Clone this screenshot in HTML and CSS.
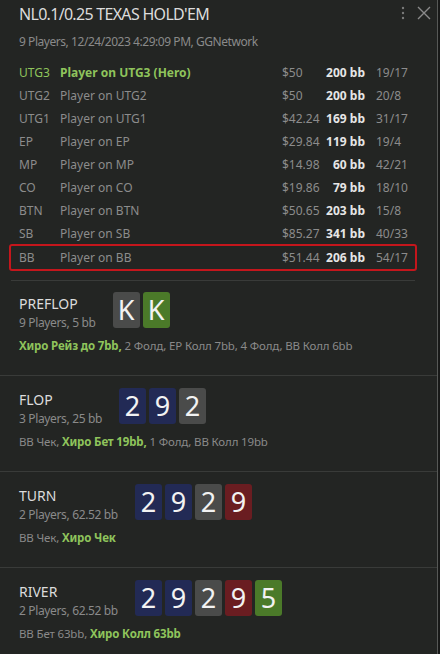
FILE: index.html
```html
<!DOCTYPE html>
<html lang="en">
<head>
  <meta charset="UTF-8" />
  <title>Hand History</title>
  <link rel="stylesheet" href="styles.css">
</head>
<body>
  <div class="panel">
    <div class="header">
      <div class="title">NL0.1/0.25 TEXAS HOLD'EM</div>
      <div class="subtitle">9 Players, 12/24/2023 4:29:09 PM, GGNetwork</div>
      <div class="header-icons">
        <svg class="icon-more" width="4" height="14" viewBox="0 0 4 14">
          <circle cx="2" cy="2" r="1.2" fill="#7a7a7a"/>
          <circle cx="2" cy="7" r="1.2" fill="#7a7a7a"/>
          <circle cx="2" cy="12" r="1.2" fill="#7a7a7a"/>
        </svg>
        <svg class="icon-close" width="14" height="14" viewBox="0 0 14 14">
          <path d="M1 1 L13 13 M13 1 L1 13" stroke="#8a8a8a" stroke-width="1.4" fill="none"/>
        </svg>
      </div>
    </div>

    <div class="players">
      <div class="row hero">
        <span class="pos">UTG3</span><span class="name">Player on UTG3 (Hero)</span>
        <span class="money">$50</span><span class="bb">200 bb</span><span class="ratio">19/17</span>
      </div>
      <div class="row">
        <span class="pos">UTG2</span><span class="name">Player on UTG2</span>
        <span class="money">$50</span><span class="bb">200 bb</span><span class="ratio">20/8</span>
      </div>
      <div class="row">
        <span class="pos">UTG1</span><span class="name">Player on UTG1</span>
        <span class="money">$42.24</span><span class="bb">169 bb</span><span class="ratio">31/17</span>
      </div>
      <div class="row">
        <span class="pos">EP</span><span class="name">Player on EP</span>
        <span class="money">$29.84</span><span class="bb">119 bb</span><span class="ratio">19/4</span>
      </div>
      <div class="row">
        <span class="pos">MP</span><span class="name">Player on MP</span>
        <span class="money">$14.98</span><span class="bb">60 bb</span><span class="ratio">42/21</span>
      </div>
      <div class="row">
        <span class="pos">CO</span><span class="name">Player on CO</span>
        <span class="money">$19.86</span><span class="bb">79 bb</span><span class="ratio">18/10</span>
      </div>
      <div class="row">
        <span class="pos">BTN</span><span class="name">Player on BTN</span>
        <span class="money">$50.65</span><span class="bb">203 bb</span><span class="ratio">15/8</span>
      </div>
      <div class="row">
        <span class="pos">SB</span><span class="name">Player on SB</span>
        <span class="money">$85.27</span><span class="bb">341 bb</span><span class="ratio">40/33</span>
      </div>
      <div class="row marked">
        <span class="pos">BB</span><span class="name">Player on BB</span>
        <span class="money">$51.44</span><span class="bb">206 bb</span><span class="ratio">54/17</span>
      </div>
    </div>

    <div class="street">
      <div class="street-head">
        <div class="street-info">
          <div class="street-name">PREFLOP</div>
          <div class="street-sub">9 Players, 5 bb</div>
        </div>
        <div class="cards">
          <span class="card gray">K</span><span class="card green">K</span>
        </div>
      </div>
      <div class="actions"><b>Хиро Рейз до 7bb,</b> 2 Фолд, EP Колл 7bb, 4 Фолд, BB Колл 6bb</div>
    </div>

    <div class="street">
      <div class="street-head">
        <div class="street-info">
          <div class="street-name">FLOP</div>
          <div class="street-sub">3 Players, 25 bb</div>
        </div>
        <div class="cards">
          <span class="card blue">2</span><span class="card blue">9</span><span class="card gray">2</span>
        </div>
      </div>
      <div class="actions">BB Чек, <b>Хиро Бет 19bb,</b> 1 Фолд, BB Колл 19bb</div>
    </div>

    <div class="street">
      <div class="street-head">
        <div class="street-info">
          <div class="street-name">TURN</div>
          <div class="street-sub">2 Players, 62.52 bb</div>
        </div>
        <div class="cards">
          <span class="card blue">2</span><span class="card blue">9</span><span class="card gray">2</span><span class="card red">9</span>
        </div>
      </div>
      <div class="actions">BB Чек, <b>Хиро Чек</b></div>
    </div>

    <div class="street">
      <div class="street-head">
        <div class="street-info">
          <div class="street-name">RIVER</div>
          <div class="street-sub">2 Players, 62.52 bb</div>
        </div>
        <div class="cards">
          <span class="card blue">2</span><span class="card blue">9</span><span class="card gray">2</span><span class="card red">9</span><span class="card green">5</span>
        </div>
      </div>
      <div class="actions">BB Бет 63bb, <b>Хиро Колл 63bb</b></div>
    </div>
  </div>
</body>
</html>
```

FILE: styles.css
```css
* {
  margin: 0;
  padding: 0;
  box-sizing: border-box;
}

body {
  background: #181918;
  font-family: 'Noto Sans', 'Open Sans', sans-serif;
  height: 654px;
  overflow: hidden;
}

.panel {
  width: 438px;
  min-height: 654px;
  background: #232523;
  border-right: 1px solid #575957;
}

.header {
  position: relative;
  padding: 3px 19px 0;
}

.title {
  font-size: 16px;
  line-height: 22px;
  letter-spacing: -0.7px;
  color: #dcdcdc;
}

.subtitle {
  font-size: 12px;
  line-height: 18px;
  letter-spacing: -0.45px;
  margin-top: 8px;
  color: #8a8a8a;
}

.header-icons {
  position: absolute;
  top: 6px;
  right: 6px;
  display: flex;
  align-items: center;
  gap: 12px;
}

.players {
  margin: 10px 0 0 11px;
  width: 404px;
  padding-bottom: 11px;
  border-bottom: 1px solid #393b39;
}

.row {
  display: grid;
  grid-template-columns: 41px 222px 40px 43px 11px auto;
  align-items: center;
  height: 23px;
  padding-left: 8px;
  font-size: 12px;
  color: #8c8c8c;
  white-space: nowrap;
}

.row .ratio {
  grid-column: 6;
}

.row .bb {
  text-align: right;
  font-weight: bold;
  color: #e6e6e6;
}

.row.hero .pos,
.row.hero .name {
  color: #8fc45c;
}

.row.hero .name {
  font-weight: bold;
}

.row.marked {
  outline: 2px solid #c4161c;
  border-radius: 1px;
  margin-top: 1px;
}

.street {
  border-bottom: 1px solid #393b39;
  padding: 14px 19px 21px;
}

.players + .street {
  padding-top: 13px;
}

.street-head {
  display: flex;
  align-items: flex-start;
  gap: 17px;
}

.street-name {
  font-size: 14px;
  line-height: 20px;
  color: #dcdcdc;
}

.street-sub {
  font-size: 12px;
  line-height: 18px;
  letter-spacing: -0.35px;
  color: #8a8a8a;
}

.cards {
  display: flex;
  gap: 3px;
  margin-top: -2px;
}

.card {
  width: 27px;
  height: 36px;
  border-radius: 3px;
  color: #f2f2f2;
  font-size: 27px;
  line-height: 36px;
  text-align: center;
}

.card.gray {
  background: #4a4b4a;
}

.card.blue {
  background: #222a55;
}

.card.red {
  background: #6a1d21;
}

.card.green {
  background: #4b7a29;
}

.actions {
  margin-top: 6px;
  font-size: 11.5px;
  line-height: 16px;
  letter-spacing: -0.15px;
  color: #8a8a8a;
}

.actions b {
  color: #8fc45c;
}
```
